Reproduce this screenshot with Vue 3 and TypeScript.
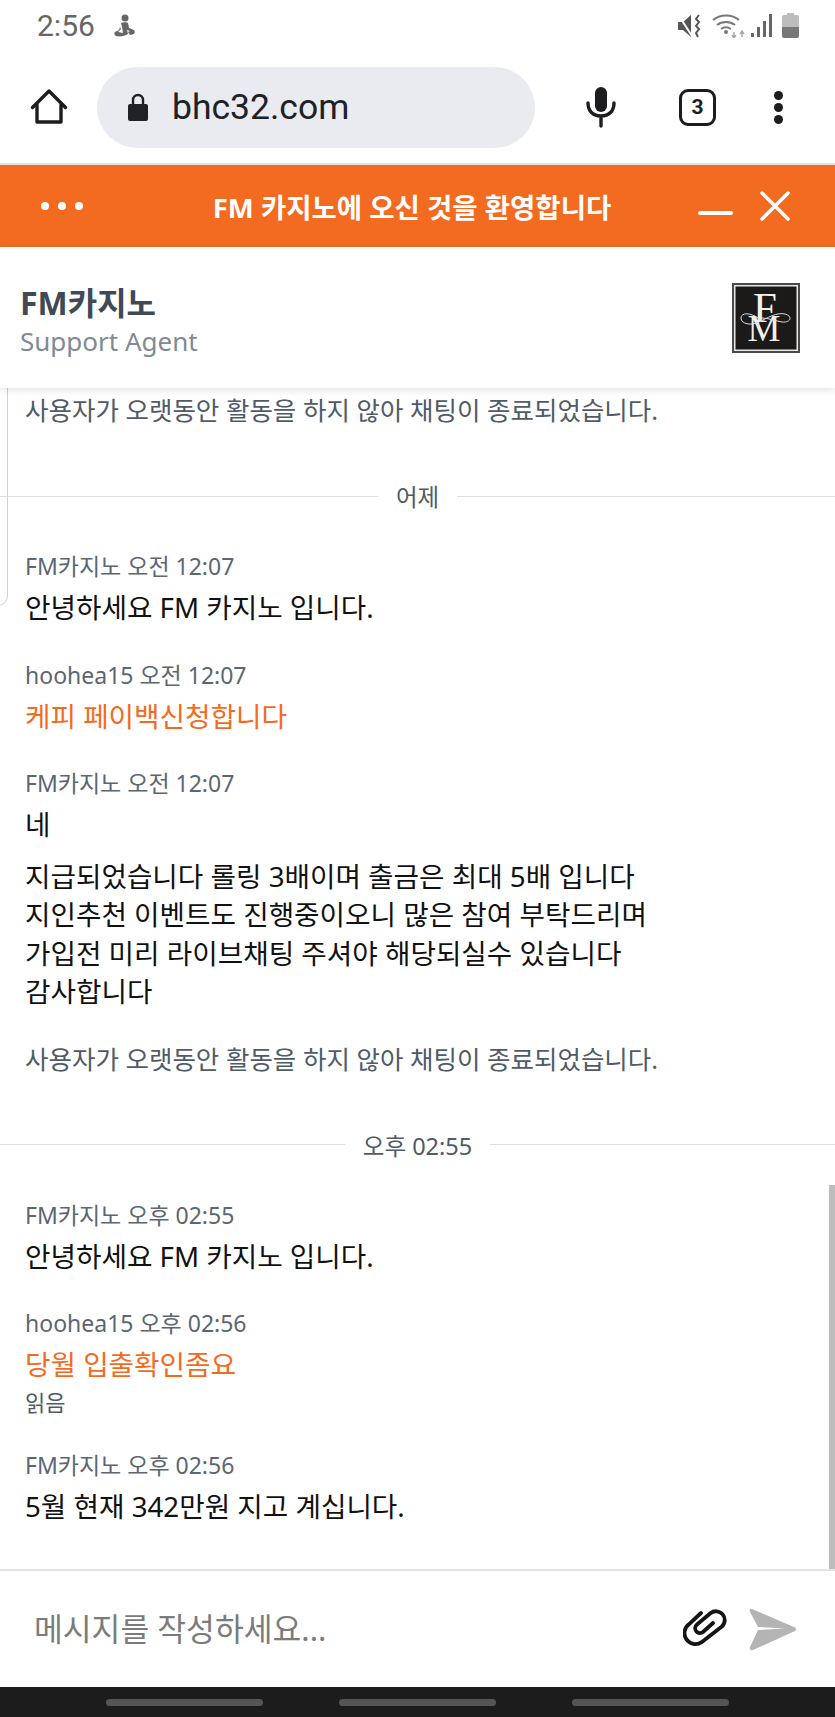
<script setup lang="ts">
interface ChatItem {
  kind: 'notice' | 'divider' | 'msg'
  text?: string
  lines?: string[]
  meta?: string
  mine?: boolean
  read?: boolean
}

const items: ChatItem[] = [
  { kind: 'notice', text: '사용자가 오랫동안 활동을 하지 않아 채팅이 종료되었습니다.' },
  { kind: 'divider', text: '어제' },
  { kind: 'msg', meta: 'FM카지노 오전 12:07', lines: ['안녕하세요 FM 카지노 입니다.'] },
  { kind: 'msg', meta: 'hoohea15 오전 12:07', lines: ['케피 페이백신청합니다'], mine: true },
  {
    kind: 'msg',
    meta: 'FM카지노 오전 12:07',
    lines: [
      '네',
      '지급되었습니다 롤링 3배이며 출금은 최대 5배 입니다\n지인추천 이벤트도 진행중이오니 많은 참여 부탁드리며\n가입전 미리 라이브채팅 주셔야 해당되실수 있습니다\n감사합니다',
    ],
  },
  { kind: 'notice', text: '사용자가 오랫동안 활동을 하지 않아 채팅이 종료되었습니다.' },
  { kind: 'divider', text: '오후 02:55' },
  { kind: 'msg', meta: 'FM카지노 오후 02:55', lines: ['안녕하세요 FM 카지노 입니다.'] },
  { kind: 'msg', meta: 'hoohea15 오후 02:56', lines: ['당월 입출확인좀요'], mine: true, read: true },
  { kind: 'msg', meta: 'FM카지노 오후 02:56', lines: ['5월 현재 342만원 지고 계십니다.'] },
]
</script>

<template>
  <div class="phone">
    <div class="status">
      <div class="status-left">
        <span class="clock">2:56</span>
        <svg width="21" height="24" viewBox="0 0 21 24" fill="#666">
          <circle cx="11" cy="4" r="3.500" />
          <path d="M7 9c2-1 6-1 7 0l1 5 5 2c1 1 1 3 0 4l-4 1-2-3 2-1-3-1 1 4c-3 2-8 3-12 2-2-1-2-3-1-4l4-2 1-3 1 2-3 3 5 1-1-6z" />
        </svg>
      </div>
      <div class="status-right">
        <svg class="st-mute" width="24" height="24" viewBox="0 0 24 24" fill="#555">
          <path d="M0 8h5l8-7v22l-8-7H0z" />
          <path d="M1 2l13 20" stroke="#fff" stroke-width="2" />
          <path d="M21 1l-3 4 3 3-3 4 3 3-3 4 2 4" fill="none" stroke="#555" stroke-width="2" />
        </svg>
        <svg class="st-wifi" width="33" height="24" viewBox="0 0 33 24" fill="none" stroke="#777" stroke-width="2">
          <path d="M1 6c7-6 19-6 26 0M5 11c5-4 13-4 18 0M9 15c3-2 7-2 10 0" />
          <circle cx="14" cy="18" r="2" fill="#777" stroke="none" />
          <path d="M22 24v-6M20 21l2 3 2-3M30 23v-6M28 20l2-3 2 3" stroke="#aaa" stroke-width="1.500" />
        </svg>
        <svg class="st-signal" width="21" height="23" viewBox="0 0 21 23" fill="#666">
          <rect x="0" y="19" width="3" height="4" />
          <rect x="6" y="13" width="3" height="10" />
          <rect x="12" y="7" width="3" height="16" />
          <rect x="18" y="0" width="3" height="23" />
        </svg>
        <svg class="st-batt" width="17" height="25" viewBox="0 0 17 25">
          <path d="M5 0h7v2h3a2 2 0 0 1 2 2v10H0V4a2 2 0 0 1 2-2h3z" fill="#bdbdbd" />
          <path d="M0 14h17v9a2 2 0 0 1-2 2H2a2 2 0 0 1-2-2z" fill="#777" />
        </svg>
      </div>
    </div>

    <div class="toolbar">
      <svg class="home" width="38" height="38" viewBox="0 0 38 38" fill="none" stroke="#1d1d1f" stroke-width="3.400" stroke-linejoin="round" stroke-linecap="round">
        <path d="M2.500 19.500 19 3l16.500 16.500" />
        <path d="M7 17v17h24V17" />
      </svg>
      <div class="url">
        <svg width="22" height="28" viewBox="0 0 22 28" fill="#202124">
          <path d="M3 11h16a2 2 0 0 1 2 2v13a2 2 0 0 1-2 2H3a2 2 0 0 1-2-2V13a2 2 0 0 1 2-2z" />
          <path d="M6 12V7a5 5 0 0 1 10 0v5" fill="none" stroke="#202124" stroke-width="2.400" />
        </svg>
        <span>bhc32.com</span>
      </div>
      <svg class="mic" width="30" height="42" viewBox="0 0 30 42" fill="none">
        <rect x="9" y="1" width="12" height="25" rx="6" fill="#1d1d1f" />
        <path d="M2 17c0 8 5 13 13 13s13-5 13-13M15 30v10" stroke="#1d1d1f" stroke-width="3.400" stroke-linecap="round" />
      </svg>
      <div class="tabs">3</div>
      <div class="dots"><i></i><i></i><i></i></div>
    </div>

    <div class="orange">
      <div class="o-dots"><i></i><i></i><i></i></div>
      <div class="o-title">FM 카지노에 오신 것을 환영합니다</div>
      <div class="o-min"></div>
      <svg class="o-close" width="30" height="30" viewBox="0 0 30 30" stroke="#fff" stroke-width="3.500" stroke-linecap="round">
        <path d="M2 2l26 26M28 2L2 28" />
      </svg>
    </div>

    <div class="agent">
      <div class="agent-info">
        <div class="agent-name">FM카지노</div>
        <div class="agent-role">Support Agent</div>
      </div>
      <svg class="logo" width="68" height="70" viewBox="0 0 68 70">
        <rect x="1" y="1" width="66" height="68" fill="#e8e8e8" stroke="#4a4a4a" stroke-width="2" />
        <rect x="3.500" y="3.500" width="61" height="63" fill="#1b1a18" />
        <text x="33" y="39" text-anchor="middle" class="logo-f">F</text>
        <text x="32" y="58" text-anchor="middle" class="logo-m">M</text>
        <path d="M30 38C20 29 9 29 9 35s10 8 18 4 18-10 26-8 6 9-3 8c-6-1-14-4-20-4" fill="none" stroke="#ddd" stroke-width="1" />
      </svg>
    </div>

    <div class="chat">
      <template v-for="(item, i) in items" :key="i">
        <div v-if="item.kind === 'notice'" class="notice">{{ item.text }}</div>
        <div v-else-if="item.kind === 'divider'" class="divider"><span>{{ item.text }}</span></div>
        <div v-else class="msg">
          <div class="meta">{{ item.meta }}</div>
          <div v-for="(line, j) in item.lines" :key="j" class="bubble" :class="{ mine: item.mine }">{{ line }}</div>
          <div v-if="item.read" class="read">읽음</div>
        </div>
      </template>
      <div class="scroll-thumb"></div>
    </div>

    <div class="input">
      <div class="placeholder">메시지를 작성하세요...</div>
      <svg width="44" height="40" viewBox="0 0 44 40" fill="none" stroke="#151515" stroke-width="3.800" stroke-linecap="round" stroke-linejoin="round">
        <path d="M18 4 6.400 14.800A9.500 9.500 0 0 0 18.600 33.200L38.600 17.700A8.500 8.500 0 0 0 27.400 4.300L14 15.500A4 4 0 0 0 20 23L30 14" />
      </svg>
      <svg class="send" width="48" height="43" viewBox="0 0 48 43" fill="#b4b4b4">
        <path d="M3 1 46 19.500Q48 21 46 23L4 42Q0 43 1 39L9 22 36 20.500 9 19 1 4Q0 0 3 1z" />
      </svg>
    </div>

    <div class="nav"><i></i><i></i><i></i></div>
    <div class="edge"></div>
  </div>
</template>

<style>
html, body { margin: 0; background: #fff; }
</style>

<style scoped>
.phone {
  position: relative;
  width: 835px;
  height: 1717px;
  display: flex;
  flex-direction: column;
  overflow: hidden;
  background: #fff;
  font-family: "Noto Sans", "Noto Sans CJK KR", sans-serif;
}
.status {
  height: 51px;
  box-sizing: border-box;
  padding: 0 36px 0 37px;
  display: flex;
  justify-content: space-between;
  align-items: center;
  flex-shrink: 0;
}
.status-left, .status-right { display: flex; align-items: center; }
.status-left { gap: 19px; }
.st-wifi { margin-left: 10px; }
.st-signal { margin-left: 6px; }
.st-batt { margin-left: 10px; }
.clock {
  font-family: Roboto, sans-serif;
  font-size: 30px;
  color: #666;
}
.toolbar {
  height: 112px;
  padding: 0 0 0 30px;
  display: flex;
  align-items: center;
  border-bottom: 2px solid #e4e2de;
  flex-shrink: 0;
}
.home { margin-right: 29px; }
.url {
  width: 438px;
  height: 81px;
  box-sizing: border-box;
  border-radius: 41px;
  background: #e9ebf0;
  padding-left: 30px;
  display: flex;
  align-items: center;
  gap: 23px;
  font-family: Roboto, sans-serif;
  font-size: 35.500px;
  color: #202124;
}
.mic { margin-left: 51px; }
.tabs {
  width: 37px;
  height: 37px;
  box-sizing: border-box;
  border: 3.500px solid #1d1d1f;
  border-radius: 9px;
  margin-left: 63px;
  display: flex;
  align-items: center;
  justify-content: center;
  font: 700 21px Roboto, sans-serif;
  color: #1d1d1f;
}
.dots {
  display: flex;
  flex-direction: column;
  gap: 3px;
  margin-left: 58px;
}
.dots i {
  width: 9px;
  height: 9px;
  border-radius: 50%;
  background: #1d1d1f;
}
.orange {
  height: 82px;
  background: #f36b21;
  display: flex;
  align-items: center;
  color: #fff;
  position: relative;
  flex-shrink: 0;
}
.o-dots {
  display: flex;
  gap: 9px;
  margin-left: 41px;
}
.o-dots i {
  width: 8px;
  height: 8px;
  border-radius: 50%;
  background: #fff;
}
.o-title {
  position: absolute;
  left: 0;
  right: 11px;
  text-align: center;
  font-size: 27.500px;
  font-weight: 700;
}
.o-min {
  width: 35px;
  height: 4px;
  border-radius: 2px;
  background: #fff;
  margin: 14px 0 0 615px;
}
.o-close { margin-left: 27px; }
.agent {
  height: 141px;
  box-sizing: border-box;
  padding: 0 35px 0 20px;
  display: flex;
  justify-content: space-between;
  align-items: center;
  background: #fff;
  box-shadow: 0 2px 8px rgba(0, 0, 0, 0.12);
  position: relative;
  z-index: 2;
  flex-shrink: 0;
}
.agent-info { padding-top: 9px; }
.agent-name {
  font-size: 32px;
  font-weight: 700;
  color: #3f4a56;
  line-height: 39px;
}
.agent-role {
  font-size: 26px;
  color: #7f8a96;
  line-height: 39px;
}
.logo-f, .logo-m {
  font-family: "Liberation Serif", serif;
  fill: #f2f0ea;
}
.logo-f { font-size: 43px; }
.logo-m { font-size: 37px; }
.chat {
  position: relative;
  flex: 1;
  overflow: hidden;
  padding-top: 4px;
}
.notice {
  padding: 0 25px;
  font-size: 25.500px;
  line-height: 36px;
  color: #4f5b68;
}
.divider {
  display: flex;
  align-items: center;
  justify-content: center;
  gap: 18px;
  height: 36px;
  margin: 50px 0 34px;
  font-size: 23.500px;
  color: #4f5b68;
}
.divider::before, .divider::after {
  content: "";
  flex: 1;
  height: 1px;
  background: #dcdfe3;
}
.msg {
  padding: 0 25px;
  margin-bottom: 30px;
}
.meta {
  font-size: 23px;
  line-height: 36px;
  color: #5c6672;
}
.bubble {
  font-size: 27.700px;
  line-height: 38.500px;
  color: #111;
  white-space: pre-line;
  margin-top: 4px;
}
.bubble + .bubble { margin-top: 13px; }
.bubble.mine { color: #f36b21; }
.read {
  font-size: 22px;
  line-height: 29px;
  color: #4f5b68;
  margin-top: 4px;
}
.scroll-thumb {
  position: absolute;
  right: 0;
  bottom: 0;
  width: 6px;
  height: 384px;
  background: #bdbdbd;
}
.input {
  height: 118px;
  box-sizing: border-box;
  border-top: 2px solid #e3e3e3;
  padding: 0 38px 0 34px;
  display: flex;
  align-items: center;
  flex-shrink: 0;
}
.placeholder {
  flex: 1;
  font-size: 31.300px;
  color: #7b7b7b;
  margin-bottom: 4px;
}
.send { margin-left: 22px; }
.nav {
  height: 30px;
  background: #1c1c1c;
  display: flex;
  justify-content: center;
  align-items: center;
  gap: 76px;
  flex-shrink: 0;
}
.nav i {
  width: 157px;
  height: 7px;
  border-radius: 4px;
  background: #555;
}
.edge {
  position: absolute;
  left: -12px;
  top: 272px;
  width: 18px;
  height: 332px;
  border: 1.500px solid #cfd2d6;
  border-radius: 10px;
}
</style>
